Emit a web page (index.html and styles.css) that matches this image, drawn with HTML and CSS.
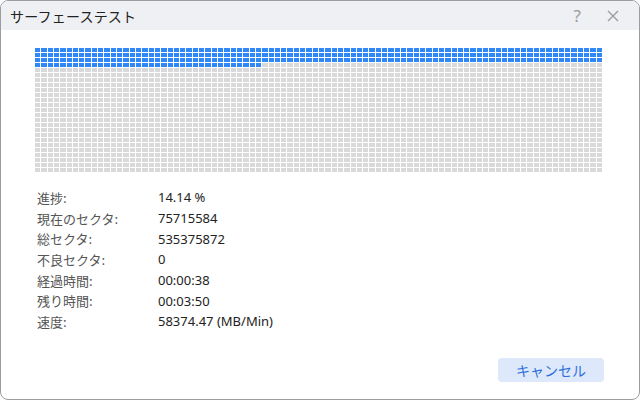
FILE: index.html
```html
<!DOCTYPE html>
<html lang="ja">
<head>
<meta charset="utf-8">
<title>サーフェーステスト</title>
<link rel="stylesheet" href="styles.css">
</head>
<body>
<div class="window">
  <div class="titlebar">
    <span class="title">サーフェーステスト</span>
    <div class="tb-buttons">
      <span class="tb-help">?</span>
      <svg class="tb-close" width="12" height="12" viewBox="0 0 12 12"><path d="M1 1 L11 11 M11 1 L1 11" stroke="#9a9a9a" stroke-width="1.3" fill="none"/></svg>
    </div>
  </div>
  <div class="content">
    <div class="grid" id="grid" data-cols="90" data-rows="25" data-done="306"></div>
    <div class="info">
      <span class="label">進捗:</span><span class="value">14.14 %</span>
      <span class="label">現在のセクタ:</span><span class="value">75715584</span>
      <span class="label">総セクタ:</span><span class="value">535375872</span>
      <span class="label">不良セクタ:</span><span class="value">0</span>
      <span class="label">経過時間:</span><span class="value">00:00:38</span>
      <span class="label">残り時間:</span><span class="value">00:03:50</span>
      <span class="label">速度:</span><span class="value">58374.47 (MB/Min)</span>
    </div>
  </div>
  <div class="footer">
    <button class="btn-cancel">キャンセル</button>
  </div>
</div>
<script src="script.js"></script>
</body>
</html>
```

FILE: styles.css
```css
html, body {
  margin: 0;
  padding: 0;
  background: #ffffff;
}
body {
  width: 640px;
  height: 400px;
  overflow: hidden;
  font-family: "Noto Sans CJK JP", "Noto Sans", sans-serif;
}
.window {
  box-sizing: border-box;
  width: 640px;
  height: 400px;
  border: 1px solid #9c9c9c;
  border-radius: 8px;
  overflow: hidden;
  background: #ffffff;
  display: flex;
  flex-direction: column;
}
.titlebar {
  height: 29px;
  flex: none;
  background: #eff0f3;
  display: flex;
  align-items: center;
  justify-content: space-between;
  padding: 0 20px 0 9px;
}
.title {
  font-size: 14px;
  color: #222222;
  letter-spacing: 0.2px;
}
.tb-buttons {
  display: flex;
  align-items: center;
  gap: 26px;
}
.tb-help {
  font-family: "Noto Sans", sans-serif;
  font-size: 17px;
  color: #9a9a9a;
  line-height: 1;
}
.content {
  flex: 1;
  padding: 18px 0 0 34px;
}
.grid {
  width: 567px;
  height: 124px;
  display: grid;
  grid-template-columns: repeat(90, 1fr);
  grid-template-rows: repeat(25, 1fr);
  gap: 1px;
}
.cell {
  background: #d9d9d9;
}
.cell.done {
  background: #2f87f8;
}
.info {
  margin-top: 15px;
  padding-left: 2px;
  display: grid;
  grid-template-columns: 121px auto;
  grid-auto-rows: 20.7px;
  align-items: center;
  font-size: 13px;
}
.label {
  color: #555555;
}
.value {
  color: #222222;
  font-family: "Noto Sans", "Noto Sans CJK JP", sans-serif;
}
.footer {
  flex: none;
  display: flex;
  justify-content: flex-end;
  padding: 0 35px 17px 0;
}
.btn-cancel {
  width: 106px;
  height: 24px;
  border: none;
  border-radius: 4px;
  background: #dde8fb;
  color: #2e6fdc;
  font-family: "Noto Sans CJK JP", sans-serif;
  font-size: 14px;
  padding: 0;
}
```

FILE: script.js
```js
var g = document.getElementById('grid');
var cols = +g.dataset.cols, rows = +g.dataset.rows, done = +g.dataset.done;
var frag = document.createDocumentFragment();
for (var i = 0; i < cols * rows; i++) {
  var c = document.createElement('div');
  c.className = i < done ? 'cell done' : 'cell';
  frag.appendChild(c);
}
g.appendChild(frag);
```
